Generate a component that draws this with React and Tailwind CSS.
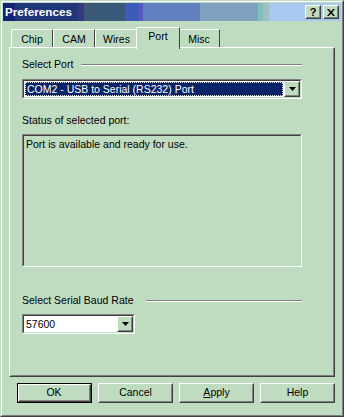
import React from "react";

const face = "bg-[#c0dcc0]";

function Raised({ className = "", children }) {
  return (
    <div className={`border border-t-white border-l-white border-r-[#404040] border-b-[#404040] ${className}`}>
      <div className="w-full h-full border border-t-[#c0dcc0] border-l-[#c0dcc0] border-r-[#808080] border-b-[#808080] flex items-center justify-center">
        {children}
      </div>
    </div>
  );
}

function Sunken({ className = "", innerClass = "", children }) {
  return (
    <div className={`border border-t-[#808080] border-l-[#808080] border-r-white border-b-white ${className}`}>
      <div className={`w-full h-full border border-t-[#404040] border-l-[#404040] border-r-[#c0dcc0] border-b-[#c0dcc0] ${innerClass}`}>
        {children}
      </div>
    </div>
  );
}

function Arrow() {
  return (
    <svg width="7" height="4" viewBox="0 0 7 4">
      <path d="M0 0h7L3.5 4z" fill="#000" />
    </svg>
  );
}

function Combo({ width, value, selected }) {
  return (
    <Sunken className={`${width} h-[20px]`} innerClass="flex bg-white">
      <div className="flex-1 flex p-[1px]">
        {selected ? (
          <div className="flex-1 bg-[#0a246a] text-white border border-dotted border-[#e0e0e0] flex items-center pl-[1px] leading-none">
            {value}
          </div>
        ) : (
          <div className="flex-1 text-black flex items-center pl-[1px] leading-none">{value}</div>
        )}
      </div>
      <Raised className={`w-[16px] h-[16px] ${face}`}>
        <Arrow />
      </Raised>
    </Sunken>
  );
}

function Label({ text, gap }) {
  return (
    <div className={`flex items-center h-[13px] ${gap}`}>
      <span className="leading-none whitespace-nowrap">{text}</span>
      <div className="flex-1 border-t border-t-[#808080] border-b border-b-white" />
    </div>
  );
}

const tabs = ["Chip", "CAM", "Wires", "Port", "Misc"];
const tabWidths = {
  Chip: "w-[42px]",
  CAM: "w-[42px]",
  Wires: "w-[43px]",
  Port: "w-[44px]",
  Misc: "w-[42px]",
};

function Button({ children, isDefault }) {
  if (isDefault) {
    return (
      <div className="w-[75px] h-[20px] border border-black">
        <div className="w-full h-full border border-t-white border-l-white border-r-[#404040] border-b-[#404040]">
          <div className="w-full h-full border-r border-b border-r-[#808080] border-b-[#808080] flex items-center justify-center">
            {children}
          </div>
        </div>
      </div>
    );
  }
  return (
    <Raised className="w-[75px] h-[20px]">
      {children}
    </Raised>
  );
}

export default function App() {
  return (
    <div className={`w-[344px] h-[417px] ${face} font-['Liberation_Sans',Arial,sans-serif] text-[10.5px] text-black overflow-hidden`}>
      <div className="w-full h-full border border-t-[#c0dcc0] border-l-[#c0dcc0] border-r-[#404040] border-b-[#404040]">
        <div className="w-full h-full border border-t-white border-l-white border-r-[#808080] border-b-[#808080] p-[1px] flex flex-col">
          {/* title bar */}
          <div className="h-[18px] flex items-center justify-between pl-[2px] pr-[2px] bg-[linear-gradient(to_right,#0f2478_0px,#0f2478_12px,#1f3678_12px,#1f3678_74px,#36387c_74px,#36387c_81px,#3a5878_81px,#3a5878_122px,#3c5cbc_122px,#3c5cbc_136px,#5858c0_136px,#5858c0_140px,#6080c0_140px,#6080c0_197px,#80a0c0_197px,#80a0c0_255px,#80c0c0_255px,#80c0c0_260px,#a0c0c0_260px,#a0c0c0_266px,#a8c8f0_266px)]">
            <span className="text-white font-bold text-[11.7px] leading-none">Preferences</span>
            <div className="flex gap-[2px]">
              <Raised className={`w-[16px] h-[14px] ${face}`}>
                <span className="font-bold text-[11px] leading-none">?</span>
              </Raised>
              <Raised className={`w-[16px] h-[14px] ${face}`}>
                <svg width="8" height="7" viewBox="0 0 8 7">
                  <path d="M0 0h2l2 2.5L6 0h2L5 3.5 8 7H6L4 4.5 2 7H0l3-3.5z" fill="#000" />
                </svg>
              </Raised>
            </div>
          </div>

          <div className="px-[6px] pt-[6px]">
            {/* tabs */}
            <div className="flex items-end h-[20px] pl-[2px]">
              {tabs.map((t) => {
                const sel = t === "Port";
                return sel ? (
                  <div
                    key={t}
                    className={`${tabWidths[t]} h-[22px] -mx-[2px] -mb-[2px] relative z-10 ${face} border-l border-t border-l-white border-t-white border-r border-r-[#404040] rounded-tl-[2px] rounded-tr-[1px] flex justify-center pt-[3px]`}
                  >
                    <span className="leading-none">{t}</span>
                  </div>
                ) : (
                  <div
                    key={t}
                    className={`${tabWidths[t]} h-[18px] border-l border-t border-l-white border-t-white border-r border-r-[#404040] rounded-tl-[2px] rounded-tr-[1px] flex justify-center pt-[4px]`}
                  >
                    <span className="leading-none">{t}</span>
                  </div>
                );
              })}
            </div>

            {/* panel */}
            <div className="h-[330px] border border-t-white border-l-white border-r-[#404040] border-b-[#404040]">
              <div className="h-full border border-t-[#c0dcc0] border-l-[#c0dcc0] border-r-[#808080] border-b-[#808080] pl-[11px] pr-[31px] pt-[9px] flex flex-col">
                <Label text="Select Port" gap="gap-[8px]" />
                <div className="mt-[8px]">
                  <Combo width="w-[280px]" value="COM2 - USB to Serial (RS232) Port" selected />
                </div>
                <div className="mt-[15px] h-[13px] flex items-center leading-none">Status of selected port:</div>
                <Sunken className="mt-[7px] w-[280px] h-[133px]" innerClass="pl-[2px] pt-[3px] leading-none">
                  Port is available and ready for use.
                </Sunken>
                <div className="mt-[27px]">
                  <Label text="Select Serial Baud Rate" gap="gap-[13px]" />
                </div>
                <div className="mt-[7px]">
                  <Combo width="w-[113px]" value="57600" />
                </div>
              </div>
            </div>

            {/* buttons */}
            <div className="flex gap-[6px] ml-[8px] mt-[6px]">
              <Button isDefault>OK</Button>
              <Button>Cancel</Button>
              <Button>
                <span><span className="underline">A</span>pply</span>
              </Button>
              <Button>Help</Button>
            </div>
          </div>
        </div>
      </div>
    </div>
  );
}
